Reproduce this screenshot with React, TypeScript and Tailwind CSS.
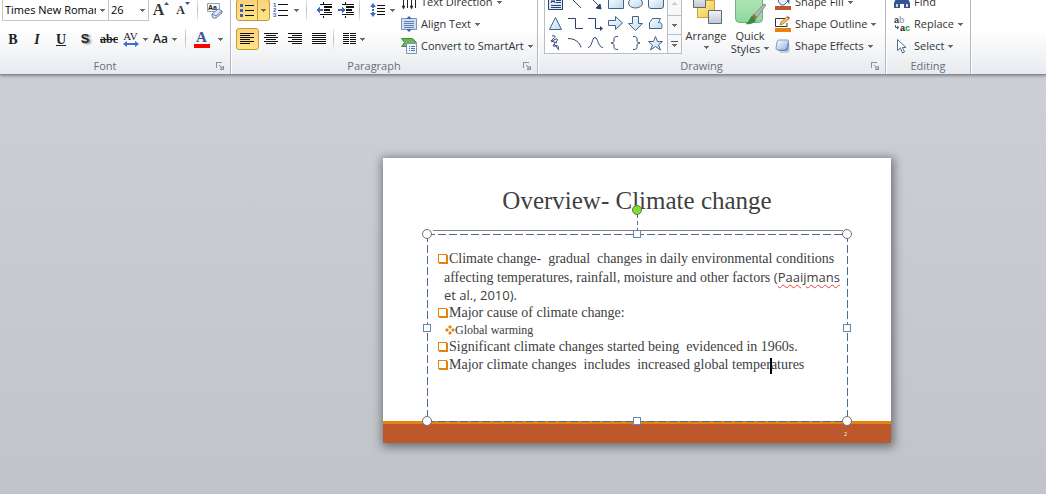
import React from 'react';

const Caret = ({ className = '' }: { className?: string }) => (
  <svg width="5" height="3" viewBox="0 0 5 3" className={`shrink-0 ${className}`} shapeRendering="crispEdges">
    <path d="M0 0h5v1H4v1H3v1H2V2H1V1H0z" fill="#6a6a6a" />
  </svg>
);

const Launcher = () => (
  <button aria-label="More options" className="w-5 h-4 flex items-center justify-center">
    <svg width="8" height="8" viewBox="0 0 8 8" fill="none" stroke="#8b8f94" shapeRendering="crispEdges">
      <path d="M.5 6V.5H6" />
      <path d="M3 3l3 3" />
      <path d="M4 7h3V4h1v4H4z" fill="#8b8f94" stroke="none" />
      <path d="M4 4h3v3H4z" fill="#8b8f94" stroke="none" opacity=".5" />
    </svg>
  </button>
);

interface GroupProps {
  title: string;
  launcher?: boolean;
  children: React.ReactNode;
}

const Group: React.FC<GroupProps> = ({ title, launcher = true, children }) => (
  <section className="shrink-0 flex flex-col border-r border-[#b4b9c1] shadow-[1px_0_0_#ffffff]">
    <div className="h-[66px] flex">{children}</div>
    <div className="h-[17px] flex items-center">
      <h2 className="flex-1 text-center text-[11px] leading-4 text-[#66707c]">{title}</h2>
      {launcher && <Launcher />}
    </div>
  </section>
);

const Sep = ({ className = '' }: { className?: string }) => (
  <span className={`w-px h-5 shrink-0 bg-gradient-to-b from-[#e4e6e9] via-[#b9bdc3] to-[#e4e6e9] ${className}`} />
);

interface ToolProps {
  label: string;
  className?: string;
  children: React.ReactNode;
}

const Tool: React.FC<ToolProps> = ({ label, className = 'w-6', children }) => (
  <button aria-label={label} className={`h-[22px] shrink-0 flex items-center justify-center gap-1 ${className}`}>
    {children}
  </button>
);

const MenuItem = ({ label, icon, caret = true }: { label: string; icon: React.ReactNode; caret?: boolean }) => (
  <button className="h-[22px] flex items-center gap-1 text-[11px] text-[#333] whitespace-nowrap">
    {icon}
    <span>{label}</span>
    {caret && <Caret />}
  </button>
);

const Lines = ({ rows }: { rows: [number, number][] }) => (
  <svg width="15" height="12" viewBox="0 0 15 12" fill="#111" shapeRendering="crispEdges">
    {rows.map(([x, w], i) => (
      <rect key={i} x={x} y={i * 2} width={w} height="1" />
    ))}
  </svg>
);

const Indent = ({ right = false }: { right?: boolean }) => (
  <svg width="17" height="16" viewBox="0 0 17 16" shapeRendering="crispEdges">
    <path d="M5 2h12v1H5zM9 4h8v2H9zM9 7h6v2H9zM9 10h8v1H9zM5 12h12v1H5zM8 0h1v2H8zM8 14h1v2H8z" fill="#111" />
    <path d={right ? 'M1 7h4V5l4 3-4 3V9H1z' : 'M8 7H5V5L1 8l4 3V9h3z'} fill="#3f6fc4" />
  </svg>
);

const shapes: { name: string; art: React.ReactNode }[] = [
  {
    name: 'Text box',
    art: (
      <>
        <path d="M1.500 1.500h14v13h-14z" fill="#dfeaf6" />
        <path d="M9 5.500h5M9 7.500h5M4 10.500h10M4 12.500h10" />
        <path d="M4 8l2-5 2 5M4.500 6.500h3" />
      </>
    ),
  },
  { name: 'Line', art: <path d="M3 2l11 11" /> },
  { name: 'Arrow', art: <><path d="M3 2l10 10" /><path d="M14 14l-5-1 4-4z" fill="#2b4170" /></> },
  { name: 'Rectangle', art: <path d="M1.500 2.500h15v11h-15z" fill="url(#pale)" stroke="#416489" /> },
  { name: 'Oval', art: <ellipse cx="8.500" cy="8" rx="7" ry="5" fill="url(#pale)" stroke="#416489" /> },
  { name: 'Rounded rectangle', art: <rect x="1.500" y="2.500" width="15" height="11" rx="2.500" fill="url(#pale)" stroke="#416489" /> },
  { name: 'Triangle', art: <path d="M8.500 2.500l6 12h-12z" fill="url(#pale)" stroke="#416489" /> },
  { name: 'Elbow connector', art: <path d="M1 3.500h7.500v10H16" /> },
  { name: 'Elbow arrow', art: <><path d="M1 3.500h7.500v10H13" /><path d="M13 11l3 2.500-3 2.500z" fill="#2b4170" stroke="none" /></> },
  { name: 'Right arrow', art: <path d="M1.500 5.500h7v-4l7 6.500-7 6.500v-4h-7z" fill="url(#pale)" stroke="#416489" /> },
  { name: 'Down arrow', art: <path d="M5.500 1.500h6v7h4l-7 7-7-7h4z" fill="url(#pale)" stroke="#416489" /> },
  { name: 'Freeform', art: <path d="M5.500 3.500h8l-2 4c4 0 4 3 3 6h-12v-6z" fill="url(#pale)" stroke="#416489" /> },
  { name: 'Scribble', art: <path d="M5 1c4-1 4 1 1 3s-2 3 1 1 5-1 2 2-4 5-1 4 4 0 3 3M7 9l5 6M4 6l6 2" /> },
  { name: 'Arc', art: <path d="M1 3.500c7 0 12 4 13 9" /> },
  { name: 'Curve', art: <path d="M1 12.500c4 0 4-10 7-10s3 10 8 10" /> },
  { name: 'Left brace', art: <path d="M11 1.500c-4 0-4 1-4 3.500S6 8 4 8c2 0 3 .5 3 3s0 3.500 4 3.500" /> },
  { name: 'Right brace', art: <path d="M6 1.500c4 0 4 1 4 3.500s1 3 3 3c-2 0-3 .5-3 3s0 3.500-4 3.500" /> },
  { name: 'Star', art: <path d="M8.500 1.500l2 5h5l-4 3.500 2 5-5-3.500-5 3.500 2-5-4-3.500h5z" fill="url(#pale)" stroke="#416489" /> },
];

const Ribbon = () => (
  <header className="relative z-10 overflow-hidden border-b border-[#858a91] bg-gradient-to-b from-white from-40% to-[#e7eaee] shadow-[0_1px_3px_rgba(0,0,0,0.35)]">
    <div className="-mt-[9px] flex">
      <Group title="Font">
        <div className="w-[230px] pt-2 flex flex-col gap-[7px]">
          <div className="flex items-center pl-0.5">
            <label className="relative flex">
              <select aria-label="Font name" className="w-[107px] h-[22px] appearance-none border border-[#c3c7cd] bg-white pl-0.5 pr-3 text-[11px] text-black">
                <option>Times New Roman</option>
              </select>
              <Caret className="absolute right-1 top-[10px] pointer-events-none" />
            </label>
            <label className="relative flex">
              <select aria-label="Font size" className="w-10 h-[22px] appearance-none border border-l-0 border-[#c3c7cd] bg-white pl-0.5 pr-3 text-[11px] text-black">
                <option>26</option>
              </select>
              <Caret className="absolute right-1 top-[10px] pointer-events-none" />
            </label>
            <Tool label="Increase font size">
              <span className="flex text-[#333]">
                <span className="font-['Liberation_Serif',serif] text-[16px] leading-6 font-bold">A</span>
                <svg width="5" height="3" viewBox="0 0 5 3" className="mt-1"><path d="M0 3l2.500-3L5 3z" fill="#2f5597" /></svg>
              </span>
            </Tool>
            <Tool label="Decrease font size" className="w-5">
              <span className="flex text-[#333]">
                <span className="font-['Liberation_Serif',serif] text-[12px] leading-6 font-bold">A</span>
                <svg width="5" height="3" viewBox="0 0 5 3" className="mt-1"><path d="M0 0l2.500 3L5 0z" fill="#2f5597" /></svg>
              </span>
            </Tool>
            <Sep className="ml-1 mr-1" />
            <Tool label="Clear formatting">
              <svg width="17" height="17" viewBox="0 0 17 17" fill="none">
                <path d="M1.500 1.500h12v8h-12z" fill="#f4f7fb" stroke="#8ba3c4" />
                <text x="2" y="8" fontSize="7" fontWeight="bold" fill="#222" fontFamily="Liberation Sans, sans-serif">Aa</text>
                <path d="M6 12l6-5 4 2v2l-6 5H7l-1-2z" fill="#dbe6f5" stroke="#6783ad" />
                <path d="M6 12l4 2 6-5" stroke="#6783ad" />
              </svg>
            </Tool>
          </div>
          <div className="flex items-center pl-px font-['Liberation_Serif',serif] text-[14px] text-[#222]">
            <Tool label="Bold"><b>B</b></Tool>
            <Tool label="Italic"><i className="font-bold">I</i></Tool>
            <Tool label="Underline"><u className="font-bold">U</u></Tool>
            <Tool label="Shadow"><b className="font-['Liberation_Sans',sans-serif] text-[13px] [text-shadow:2px_1px_2px_#777]">S</b></Tool>
            <Tool label="Strikethrough"><s className="text-[12px] font-bold">abc</s></Tool>
            <Tool label="Character spacing" className="w-7">
              <span className="flex flex-col items-center">
                <span className="text-[11px] leading-[10px]">AV</span>
                <svg width="16" height="6" viewBox="0 0 16 6"><path d="M0 3l4-3v2h8V0l4 3-4 3V4H4v2z" fill="#3f6fc4" /></svg>
              </span>
              <Caret />
            </Tool>
            <Tool label="Change case" className="w-8">
              <span className="font-['Open_Sans',sans-serif] text-[12px] font-semibold">Aa</span>
              <Caret />
            </Tool>
            <Sep className="ml-1 mr-1" />
            <Tool label="Font color" className="w-9">
              <span className="flex flex-col items-center border-b-4 border-[#ff0000] w-4">
                <b className="text-[15px] leading-[13px] text-[#3a5a94]">A</b>
              </span>
              <Caret className="ml-1" />
            </Tool>
          </div>
        </div>
      </Group>

      <Group title="Paragraph">
        <div className="w-[170px] pt-2 pl-[5px] flex flex-col gap-[7px]">
          <div className="flex items-center">
            <div className="flex rounded-[3px] border border-[#c29a3c] bg-gradient-to-b from-[#fbd277] to-[#fee586]">
              <button aria-label="Bullets" className="w-[21px] h-5 flex items-center justify-center border-r border-[#c29a3c]">
                <svg width="14" height="14" viewBox="0 0 14 14" shapeRendering="crispEdges">
                  <path d="M5 2h9v1H5zM5 7h9v1H5zM5 12h9v1H5z" fill="#111" />
                  <path d="M0 1h3v3H0zM0 6h3v3H0zM0 11h3v3H0z" fill="#3c64ae" />
                </svg>
              </button>
              <button aria-label="Bullet styles" className="w-[11px] h-5 flex items-center justify-center"><Caret /></button>
            </div>
            <Tool label="Numbering" className="w-8">
              <svg width="15" height="16" viewBox="0 0 15 16">
                <path d="M5 2h10v1H5zM5 8h10v1H5zM5 13h10v1H5z" fill="#111" shapeRendering="crispEdges" />
                <g fontSize="6" fontWeight="bold" fill="#3c64ae" fontFamily="Liberation Sans, sans-serif">
                  <text x="0" y="5">1</text><text x="0" y="10">2</text><text x="0" y="15">3</text>
                </g>
              </svg>
              <Caret className="ml-0.5" />
            </Tool>
            <Sep className="ml-1 mr-1" />
            <Tool label="Decrease indent"><Indent /></Tool>
            <Tool label="Increase indent" className="w-5"><Indent right /></Tool>
            <Sep className="ml-1 mr-1.5" />
            <Tool label="Line spacing" className="w-8">
              <svg width="16" height="16" viewBox="0 0 16 16">
                <path d="M7 3h8v1H7zM7 6h8v1H7zM7 9h8v1H7zM7 12h8v1H7z" fill="#111" shapeRendering="crispEdges" />
                <path d="M0 5l3-4 3 4H4v1H2V5zM0 11l3 4 3-4H4v-1H2v1zM2 7h2v2H2z" fill="#3f6fc4" />
              </svg>
              <Caret />
            </Tool>
          </div>
          <div className="flex items-center">
            <Tool label="Align left" className="w-[23px] rounded-[3px] border border-[#c29a3c] bg-gradient-to-b from-[#fbd277] to-[#fee586]">
              <Lines rows={[[0, 14], [0, 10], [0, 14], [0, 10], [0, 14], [0, 10]]} />
            </Tool>
            <Tool label="Center"><Lines rows={[[0, 14], [2, 10], [0, 14], [2, 10], [0, 14], [2, 10]]} /></Tool>
            <Tool label="Align right"><Lines rows={[[0, 14], [4, 10], [0, 14], [4, 10], [0, 14], [4, 10]]} /></Tool>
            <Tool label="Justify"><Lines rows={[[0, 14], [0, 14], [0, 14], [0, 14], [0, 14], [0, 14]]} /></Tool>
            <Sep className="ml-0.5 mr-1" />
            <Tool label="Columns" className="w-8">
              <svg width="13" height="12" viewBox="0 0 13 12" fill="#111" shapeRendering="crispEdges">
                {[0, 2, 4, 6, 8, 10].map((y) => (
                  <path key={y} d={`M0 ${y}h6v1H0zM7 ${y}h6v1H7z`} />
                ))}
              </svg>
              <Caret />
            </Tool>
          </div>
        </div>
        <div className="w-[136px] flex flex-col items-start">
          <MenuItem
            label="Text Direction"
            icon={
              <svg width="16" height="16" viewBox="0 0 16 16" stroke="#222" fill="none">
                <path d="M2.500 1v13M6.500 1v13M10.500 1v13M14.500 1v13" />
                <path d="M1 12l1.500 3L4 12zM9 12l1.500 3 1.500-3z" fill="#222" strokeWidth=".5" />
              </svg>
            }
          />
          <MenuItem
            label="Align Text"
            icon={
              <svg width="16" height="16" viewBox="0 0 16 16">
                <path d="M.5 2.500h15v11H.5z" fill="#cfdff4" stroke="#7a94bb" />
                <path d="M3 5.500h10M3 7.500h10M3 9.500h10M3 11.500h10" stroke="#5f7ea9" />
                <path d="M5 3l3-3 3 3zM5 13l3 3 3-3z" fill="#3768c0" />
              </svg>
            }
          />
          <MenuItem
            label="Convert to SmartArt"
            icon={
              <svg width="16" height="16" viewBox="0 0 16 16">
                <path d="M.5.5h11l4 4-3 4H.5l3-4z" fill="#6cb35a" stroke="#478a3d" />
                <path d="M5.500 5.500h10v10h-10z" fill="#f2f6fb" stroke="#7a94bb" />
                <path d="M8 8.500h1M8 10.500h1M8 12.500h1M10 8.500h4M10 10.500h4M10 12.500h4" stroke="#4b77a8" />
              </svg>
            }
          />
        </div>
      </Group>

      <Group title="Drawing">
        <div className="pl-1.5 flex">
          <div className="h-[63px] flex border border-t-0 border-[#b9bec5] bg-white">
            <div className="grid grid-cols-[repeat(6,20px)] content-end">
              {shapes.map((s) => (
                <button key={s.name} aria-label={s.name} className="h-5 flex items-center justify-center">
                  <svg width="17" height="16" viewBox="0 0 17 16" fill="none" stroke="#2b4170">{s.art}</svg>
                </button>
              ))}
            </div>
            <div className="ml-0.5 w-[14px] flex flex-col border-l border-[#b9bec5] bg-[#f7f8fa]">
              <button aria-label="Scroll up" className="flex-1 flex items-center justify-center"><Caret className="rotate-180 opacity-30" /></button>
              <button aria-label="Scroll down" className="h-5 flex items-center justify-center border-y border-[#b9bec5]"><Caret /></button>
              <button aria-label="More shapes" className="h-[18px] flex flex-col items-center justify-center gap-0.5">
                <span className="w-[7px] h-px bg-[#555]" />
                <Caret />
              </button>
            </div>
          </div>
          <button className="ml-0.5 w-11 flex flex-col items-center text-[11px] leading-[13px] text-[#333]">
            <svg width="32" height="34" viewBox="0 0 32 34">
              <path d="M7.500 9.500h17v17h-17z" fill="url(#gold)" stroke="#c6a03a" />
              <path d="M3.500 4.500h12v12h-12z" fill="url(#steel)" stroke="#5d6a7b" />
              <path d="M18.500 19.500h13v13h-13z" fill="url(#steel)" stroke="#5d6a7b" />
            </svg>
            <span className="mt-1">Arrange</span>
            <Caret className="mt-1" />
          </button>
          <button className="w-11 flex flex-col items-center text-[11px] leading-[13px] text-[#333]">
            <svg width="32" height="34" viewBox="0 0 32 34">
              <rect x="1.500" y="2.500" width="27" height="29" rx="4" fill="url(#mint)" stroke="#68b57a" />
              <path d="M30 13l-12 13 3 3 11-15z" fill="#b6b9bd" stroke="#6c6259" strokeWidth=".6" />
              <path d="M20 23l3 3-3 3-3-3z" fill="#a5683c" />
              <path d="M18 25l4 4c-2 4-7 5-11 4 4-1 4-6 7-8z" fill="#3f8a45" />
            </svg>
            <span className="mt-1">Quick</span>
            <span className="flex items-center gap-1">Styles <Caret /></span>
          </button>
          <div className="ml-[3px] w-[110px] flex flex-col items-start">
            <MenuItem
              label="Shape Fill"
              icon={
                <svg width="16" height="16" viewBox="0 0 16 16">
                  <path d="M3 7l6-6 5 5-5 5H6z" fill="#e8eef7" stroke="#50688f" />
                  <path d="M12 4c3 1 3 4 2 6l-2-3z" fill="#3768c0" />
                  <path d="M0 12h16v4H0z" fill="#bd582c" />
                </svg>
              }
            />
            <MenuItem
              label="Shape Outline"
              icon={
                <svg width="16" height="16" viewBox="0 0 16 16">
                  <path d="M10 2.500H.5v8H12V7" fill="#fff" stroke="#333" />
                  <path d="M5 9l1-3 6-5 2 2-6 5z" fill="#f3c65a" stroke="#8a6a2a" strokeWidth=".7" />
                  <path d="M12 1l1-1 2 2-1 1z" fill="#c8463a" />
                  <path d="M0 12h16v4H0z" fill="#e48312" />
                </svg>
              }
            />
            <MenuItem
              label="Shape Effects"
              icon={
                <svg width="16" height="16" viewBox="0 0 16 16">
                  <path d="M4 5h10l1 7-2 3H5z" fill="#a9b3c2" opacity=".6" />
                  <path d="M4 2h8q2 0 1.500 2l-1.500 6q-.5 2-2.500 2H3q-2.500 0-2-2l1-6q.5-2 2-2z" fill="url(#glass)" stroke="#7f9cc8" />
                  <path d="M13 4l1 2-1 6-2 1H4l-1-1h7l2-2z" fill="#6286c4" />
                </svg>
              }
            />
          </div>
        </div>
      </Group>

      <Group title="Editing" launcher={false}>
        <div className="w-[84px] pl-2 flex flex-col items-start">
          <MenuItem
            label="Find"
            caret={false}
            icon={
              <svg width="16" height="16" viewBox="0 0 16 16">
                <path d="M3 2h3v4h4V2h3l3 7v5h-6v-4H6v4H0V9z" fill="#35558f" />
                <path d="M2 10h2v3H2zM12 10h2v3h-2z" fill="#c6d7f0" />
              </svg>
            }
          />
          <MenuItem
            label="Replace"
            icon={
              <svg width="16" height="16" viewBox="0 0 16 16" fontSize="9" fontWeight="bold" fontFamily="Liberation Sans, sans-serif">
                <text x="0" y="7" fill="#333">a</text>
                <text x="5" y="7" fill="#aaa">b</text>
                <text x="6" y="15" fill="#222">a</text>
                <text x="11" y="15" fill="#1b9a2d">c</text>
                <path d="M1.500 9v2.500H4M3 10l2 1.500L3 13" fill="none" stroke="#3f5f96" />
              </svg>
            }
          />
          <MenuItem
            label="Select"
            icon={
              <svg width="16" height="16" viewBox="0 0 16 16">
                <path d="M3.500 1.500v11l3-2.500 2 5 2-1-2-4.500h3.500z" fill="#fff" stroke="#516a94" />
              </svg>
            }
          />
        </div>
      </Group>
    </div>
  </header>
);

const SquareBullet = () => (
  <svg width="12" height="12" viewBox="0 0 12 12" className="shrink-0" fill="none" shapeRendering="crispEdges">
    <path d="M1.500 1.500h8v8h-8z" stroke="#e48312" />
    <path d="M10 2h1v9H2v-1h8z" fill="#e48312" />
  </svg>
);

const DiamondBullet = () => (
  <svg width="10" height="10" viewBox="0 0 10 10" className="shrink-0" fill="#e48312">
    <path d="M5 0l2 2-2 2-2-2zM5 6l2 2-2 2-2-2zM2 3l2 2-2 2-2-2zM8 3l2 2-2 2-2-2z" />
  </svg>
);

// Resize handles around the selected placeholder
const handles = [
  'left-0 top-0 size-[10px] rounded-full border-[#6b6f78]',
  'left-full top-0 size-[10px] rounded-full border-[#6b6f78]',
  'left-0 top-full size-[10px] rounded-full border-[#6b6f78]',
  'left-full top-full size-[10px] rounded-full border-[#6b6f78]',
  'left-1/2 top-0 size-2 border-[#6688ad]',
  'left-1/2 top-full size-2 border-[#6688ad]',
  'left-0 top-1/2 size-2 border-[#6688ad]',
  'left-full top-1/2 size-2 border-[#6688ad]',
];

const Selection = () => (
  <div className="absolute inset-0 pointer-events-none">
    <svg className="absolute inset-0 w-full h-full overflow-visible" stroke="#4b6c94" strokeDasharray="8 3" shapeRendering="crispEdges">
      <line x1="0" y1="0" x2="100%" y2="0" />
      <line x1="0" y1="100%" x2="100%" y2="100%" />
      <line x1="0" y1="0" x2="0" y2="100%" />
      <line x1="100%" y1="0" x2="100%" y2="100%" />
      <line x1="50%" y1="-20" x2="50%" y2="0" strokeDasharray="4 3" />
    </svg>
    {handles.map((h) => (
      <span key={h} className={`absolute box-border -translate-1/2 border bg-white ${h}`} />
    ))}
    <span className="absolute left-1/2 -top-6 size-[10px] -translate-1/2 rounded-full border border-[#55803a] bg-[#7fdc31]" />
  </div>
);

const Slide = () => (
  <article className="w-[508px] max-w-full h-fit bg-white font-['Liberation_Serif',serif] text-[#404040] shadow-[1px_2px_9px_2px_rgba(50,55,60,0.6)]">
    <h1 className="pt-7 pb-[14px] text-center text-[25px] leading-[30px] whitespace-pre">Overview- Climate change</h1>
    <div className="mx-[44px]">
      <hr className="ml-1.5 mr-1 border-[#7f7f7f]" />
      <div className="relative mt-[3px] h-[187px] pt-4 pl-[10px] text-[14px] leading-[18px] whitespace-pre">
        <ul>
          <li>
            <div className="flex items-center"><SquareBullet />Climate change-  gradual  changes in daily environmental conditions</div>
            <div className="pl-[7px]">affecting temperatures, rainfall, moisture and other factors <span className="font-['Open_Sans',sans-serif] text-[13px]">(<span className="underline decoration-wavy decoration-[#f04040] decoration-1 underline-offset-2">Paaijmans</span></span></div>
            <div className="pl-[7px] font-['Open_Sans',sans-serif] text-[13px] leading-4">et al., 2010).</div>
          </li>
          <li className="pt-px">
            <div className="flex items-center"><SquareBullet />Major cause of climate change:</div>
            <div className="flex items-center pl-2 text-[12px] leading-4"><DiamondBullet />Global warming</div>
          </li>
          <li className="flex items-center"><SquareBullet />Significant climate changes started being  evidenced in 1960s.</li>
          <li className="flex items-center">
            <SquareBullet />
            <span>Major climate changes  includes  increased global temper<span className="inline-block w-0.5 h-4 -mx-px align-middle bg-black" />atures</span>
          </li>
        </ul>
        <Selection />
      </div>
    </div>
    <footer className="h-[22px] border-t-[3px] border-[#e48312] bg-[#bd582c] pr-11 text-right text-[6px] leading-5 text-white">2</footer>
  </article>
);

export default function App() {
  return (
    <div className="min-h-screen flex flex-col overflow-hidden font-['Open_Sans','Noto_Sans',sans-serif] bg-[#c5c8cc]">
      <svg width="0" height="0" className="absolute">
        <defs>
          <linearGradient id="pale" x2="1" y2="1"><stop stopColor="#fff" /><stop offset="1" stopColor="#bcd7ed" /></linearGradient>
          <linearGradient id="gold" x2="1" y2="1"><stop stopColor="#fff0a8" /><stop offset="1" stopColor="#f3c63f" /></linearGradient>
          <linearGradient id="steel" x2="0" y2="1"><stop stopColor="#f2f4f7" /><stop offset="1" stopColor="#bfc7d2" /></linearGradient>
          <linearGradient id="mint" x2="0" y2="1"><stop stopColor="#b6e8bd" /><stop offset="1" stopColor="#8fd79b" /></linearGradient>
          <linearGradient id="glass" x2="1" y2="1"><stop stopColor="#fff" /><stop offset="1" stopColor="#8fb0e0" /></linearGradient>
        </defs>
      </svg>
      <Ribbon />
      <main className="flex-1 flex justify-center pl-[228px] pt-[83px] pb-12 bg-gradient-to-b from-[#cccfd4] to-[#c1c4c9]">
        <Slide />
      </main>
    </div>
  );
}
